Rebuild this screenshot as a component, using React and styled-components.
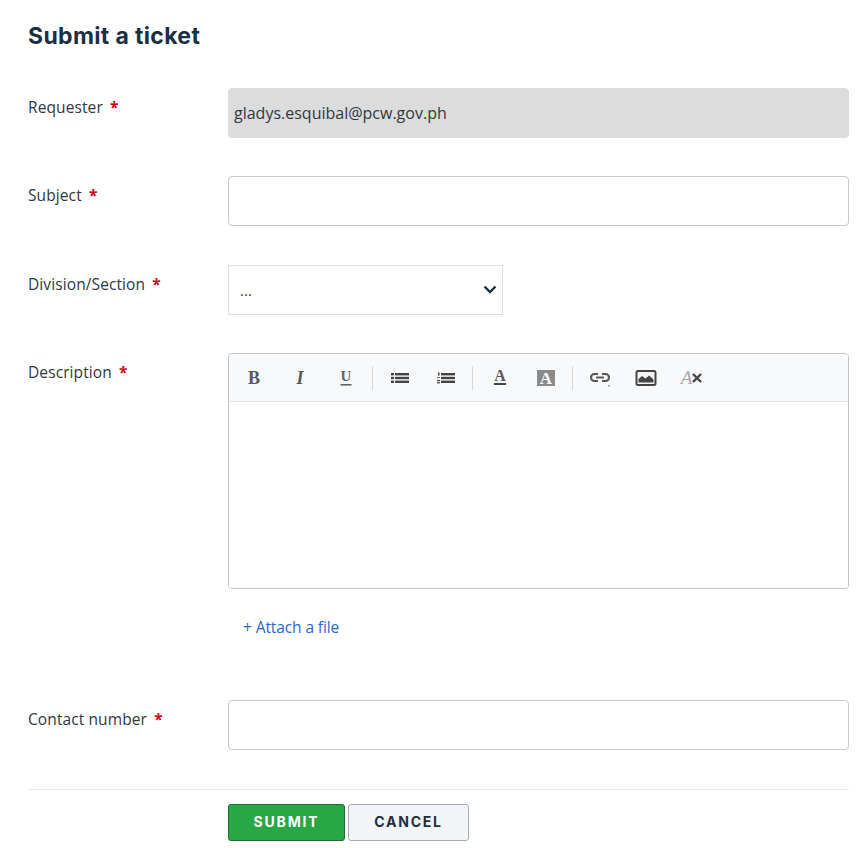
import React from 'react'
import styled, { createGlobalStyle } from 'styled-components'

const GlobalStyle = createGlobalStyle`
   html, body {
      margin: 0;
      padding: 0;
      background: #fff;
   }
   * {
      box-sizing: border-box;
   }
`

const BoldIcon = () => (
   <svg width="14" height="16" viewBox="0 0 14 16">
      <text x="7" y="14" textAnchor="middle" fontFamily="Liberation Serif, serif" fontWeight="700" fontSize="18" fill="#5a5a5a">B</text>
   </svg>
)
const ItalicIcon = () => (
   <svg width="14" height="16" viewBox="0 0 14 16">
      <text x="7" y="14" textAnchor="middle" fontFamily="Liberation Serif, serif" fontWeight="700" fontStyle="italic" fontSize="18" fill="#5a5a5a">I</text>
   </svg>
)
const UnderlineIcon = () => (
   <svg width="14" height="18" viewBox="0 0 14 18">
      <text x="7" y="12" textAnchor="middle" fontFamily="Liberation Serif, serif" fontWeight="700" fontSize="15" fill="#666">U</text>
      <rect x="1.5" y="15" width="11" height="1.6" fill="#666" />
   </svg>
)
const BulletIcon = () => (
   <svg width="20" height="12" viewBox="0 0 20 12" fill="#444">
      <rect x="1" y="1" width="3" height="2.4" />
      <rect x="1" y="4.8" width="3" height="2.4" />
      <rect x="1" y="8.6" width="3" height="2.4" />
      <rect x="5" y="1" width="14" height="2.4" />
      <rect x="5" y="4.8" width="14" height="2.4" />
      <rect x="5" y="8.6" width="14" height="2.4" />
   </svg>
)
const NumberIcon = () => (
   <svg width="20" height="12" viewBox="0 0 20 12" fill="#444">
      <rect x="2" y="0.5" width="1.5" height="3" />
      <rect x="1" y="5" width="3" height="1.2" fill="#777" />
      <rect x="1" y="8" width="3" height="1.2" />
      <rect x="1" y="10.2" width="3" height="1.2" />
      <rect x="5" y="1" width="14" height="2.4" />
      <rect x="5" y="4.8" width="14" height="2.4" />
      <rect x="5" y="8.6" width="14" height="2.4" />
   </svg>
)
const FontColorIcon = () => (
   <svg width="16" height="18" viewBox="0 0 16 18">
      <text x="8" y="12" textAnchor="middle" fontFamily="Liberation Serif, serif" fontWeight="700" fontSize="16" fill="#5a5a5a">A</text>
      <rect x="2" y="14" width="12" height="2" fill="#444" />
   </svg>
)
const BackColorIcon = () => (
   <svg width="18" height="16" viewBox="0 0 18 16">
      <rect width="18" height="16" fill="#8a8a8a" />
      <text x="9" y="14" textAnchor="middle" fontFamily="Liberation Serif, serif" fontWeight="700" fontSize="17" fill="#fff">A</text>
   </svg>
)
const LinkIcon = () => (
   <svg width="22" height="18" viewBox="0 0 22 18" fill="none" stroke="#5a5a5a">
      <path d="M9 5 H5.5 a3.5 3.5 0 0 0 0 7 H9" strokeWidth="2.2" />
      <path d="M13 5 H16.5 a3.5 3.5 0 0 1 0 7 H13" strokeWidth="2.2" />
      <rect x="7" y="7.5" width="8" height="2" fill="#5a5a5a" stroke="none" />
      <rect x="19" y="16" width="2" height="1.5" fill="#999" stroke="none" />
   </svg>
)
const ImageIcon = () => (
   <svg width="22" height="16" viewBox="0 0 22 16">
      <rect x="1.5" y="1" width="19" height="14" rx="1.5" fill="#f4f4f4" stroke="#444" strokeWidth="2" />
      <path d="M3.5 12.5 L3.5 9 L7 6 L10.5 8.5 L14 5.5 L18.5 9.5 L18.5 12.5 Z" fill="#444" />
   </svg>
)
const ClearIcon = () => (
   <svg width="24" height="16" viewBox="0 0 24 16">
      <text x="6.5" y="14" textAnchor="middle" fontFamily="Liberation Serif, serif" fontStyle="italic" fontSize="19" fill="#aaa">A</text>
      <path d="M13 4 L21 12 M21 4 L13 12" stroke="#444" strokeWidth="2.4" />
   </svg>
)

const toolGroups = [
   [
      { id: 'bold', icon: <BoldIcon /> },
      { id: 'italic', icon: <ItalicIcon /> },
      { id: 'underline', icon: <UnderlineIcon /> },
   ],
   [
      { id: 'bullet', icon: <BulletIcon /> },
      { id: 'number', icon: <NumberIcon /> },
   ],
   [
      { id: 'color', icon: <FontColorIcon /> },
      { id: 'back', icon: <BackColorIcon /> },
   ],
   [
      { id: 'link', icon: <LinkIcon /> },
      { id: 'image', icon: <ImageIcon /> },
      { id: 'clear', icon: <ClearIcon /> },
   ],
]

const App = () => (
   <Page>
      <GlobalStyle />
      <Title>Submit a ticket</Title>
      <Form>
         <Row>
            <Label>Requester <Star>*</Star></Label>
            <Input value="gladys.esquibal@pcw.gov.ph" $disabled readOnly />
         </Row>
         <Row>
            <Label>Subject <Star>*</Star></Label>
            <Input defaultValue="" />
         </Row>
         <Row>
            <Label>Division/Section <Star>*</Star></Label>
            <Select defaultValue="none">
               <option value="none">...</option>
            </Select>
         </Row>
         <Row>
            <Label>Description <Star>*</Star></Label>
            <Field>
               <Editor>
                  <Toolbar>
                     {toolGroups.map((group, index) => (
                        <ToolGroup key={group[0].id} $last={index === toolGroups.length - 1}>
                           {group.map((tool) => (
                              <Tool key={tool.id} type="button">{tool.icon}</Tool>
                           ))}
                        </ToolGroup>
                     ))}
                  </Toolbar>
                  <EditorBody />
               </Editor>
               <AttachLink href="#">+ Attach a file</AttachLink>
            </Field>
         </Row>
         <Row>
            <Label>Contact number <Star>*</Star></Label>
            <Input defaultValue="" />
         </Row>
      </Form>
      <Footer>
         <SubmitButton type="button">SUBMIT</SubmitButton>
         <CancelButton type="button">CANCEL</CancelButton>
      </Footer>
   </Page>
)

export default App

const chevron = `url("data:image/svg+xml,%3Csvg xmlns='http://www.w3.org/2000/svg' width='14' height='9' viewBox='0 0 14 9'%3E%3Cpath d='M1.5 1.5 L7 7 L12.5 1.5' fill='none' stroke='%231c2f42' stroke-width='2.4'/%3E%3C/svg%3E")`

const Page = styled.div`
   width: 858px;
   height: 848px;
   padding: 21px 9px 0 28px;
   overflow: hidden;
   font-family: 'Open Sans', 'Noto Sans', sans-serif;
   color: #2f3941;
`
const Title = styled.h1`
   margin: 0;
   height: 67px;
   font-family: Inter, sans-serif;
   font-size: 23px;
   line-height: 30px;
   font-weight: 700;
   letter-spacing: 0.35px;
   color: #1c2f42;
`
const Form = styled.div`
   display: flex;
   flex-direction: column;
   gap: 38.4px;
`
const Row = styled.div`
   display: grid;
   grid-template-columns: 200px 621px;
`
const Label = styled.label`
   padding-top: 6.9px;
   font-size: 15.5px;
   line-height: 24px;
   letter-spacing: 0.1px;
`
const Star = styled.span`
   margin-left: 3px;
   color: #d0021b;
   font-weight: 700;
`
const Input = styled.input`
   width: 100%;
   height: 50px;
   padding: 0 5px;
   border: 1px solid ${(p) => (p.$disabled ? '#dcdcdc' : '#c9c9c9')};
   border-radius: 4px;
   background: ${(p) => (p.$disabled ? '#dcdcdc' : '#fff')};
   font-family: inherit;
   font-size: 16px;
   color: #2f3941;
   outline: none;
`
const Select = styled.select`
   width: 275px;
   height: 50px;
   padding: 0 11px;
   border: 1px solid #dedede;
   border-radius: 0;
   appearance: none;
   background: #fff ${chevron} no-repeat right 5px center;
   font-family: inherit;
   font-size: 15px;
   color: #2f3941;
`
const Field = styled.div`
   display: flex;
   flex-direction: column;
`
const Editor = styled.div`
   height: 236px;
   display: flex;
   flex-direction: column;
   border: 1px solid #c4c4c4;
   border-radius: 4px;
   overflow: hidden;
`
const Toolbar = styled.div`
   height: 48px;
   display: flex;
   align-items: center;
   padding-left: 2px;
   background: #f8f9fa;
   border-bottom: 1px solid #e3e3e3;
`
const ToolGroup = styled.div`
   display: flex;
   align-items: center;
   height: 24px;
   padding-right: ${(p) => (p.$last ? '0' : '3px')};
   margin-right: 4px;
   border-right: ${(p) => (p.$last ? 'none' : '1px solid #d8d8d8')};
`
const Tool = styled.button`
   width: 46px;
   height: 24px;
   padding: 0;
   border: none;
   background: none;
   display: flex;
   align-items: center;
   justify-content: center;

   svg {
      overflow: visible;
   }
`
const EditorBody = styled.div`
   flex: 1;
   background: #fff;
`
const AttachLink = styled.a`
   display: block;
   margin: 25.6px 0 0 15px;
   height: 46.8px;
   font-size: 15.5px;
   line-height: 24px;
   letter-spacing: -0.1px;
   color: #2a66c8;
   text-decoration: none;
`
const Footer = styled.div`
   margin-top: 39px;
   padding: 14px 0 0 200px;
   border-top: 1px solid #e6e8ea;
   display: flex;
   gap: 3px;
`
const SubmitButton = styled.button`
   width: 117px;
   height: 37px;
   padding: 0 0 2px;
   border: 1px solid #1c6f33;
   border-radius: 3px;
   background: #28a745;
   color: #fff;
   font-family: Inter, sans-serif;
   font-size: 14px;
   font-weight: 700;
   letter-spacing: 1.8px;
`
const CancelButton = styled.button`
   width: 121px;
   height: 37px;
   padding: 0 0 2px;
   border: 1px solid #a5acb8;
   border-radius: 3px;
   background: #f3f4f7;
   color: #1c2f42;
   font-family: Inter, sans-serif;
   font-size: 14px;
   font-weight: 700;
   letter-spacing: 1.8px;
`
